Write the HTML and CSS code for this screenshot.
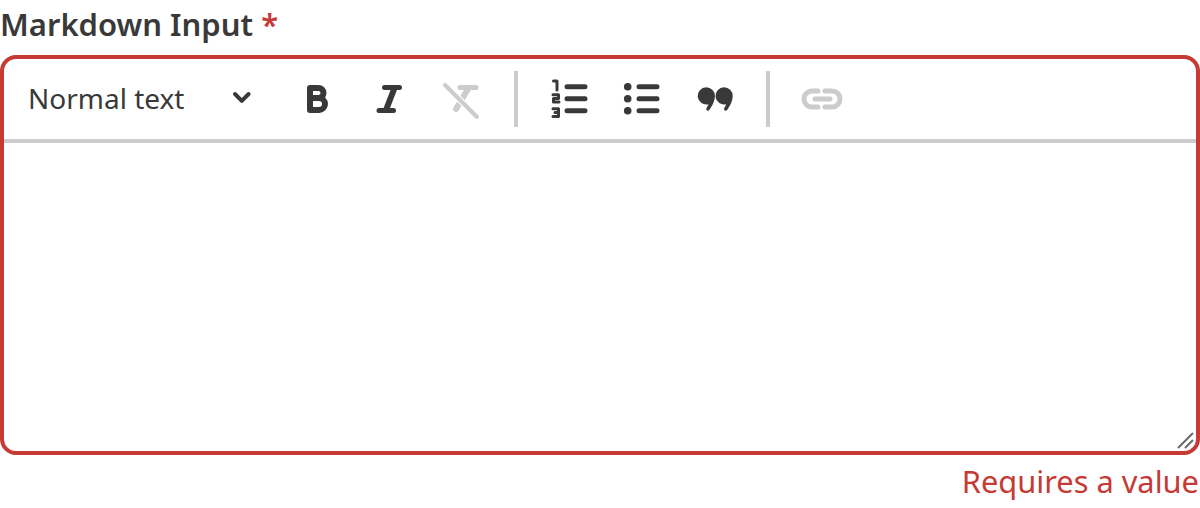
FILE: index.html
```html
<!DOCTYPE html>
<html>
<head>
    <meta name="viewport" content="width=device-width, initial-scale=1.0">
    <title>Markdown Input</title>
    <link rel="stylesheet" href="styles.css">
</head>
<body>
<div class="field">
    <label class="field-label">Markdown Input <span class="required">*</span></label>
    <div class="editor">
        <div class="toolbar">
            <div class="block-select">
                <span>Normal text</span>
                <svg class="chevron" width="20" height="14" viewBox="0 0 20 14"><path d="M3 3l6.800 6.800L16.600 3"/></svg>
            </div>
            <button class="tool" type="button" aria-label="Bold">
                <svg viewBox="0 0 48 48"><path class="heavy" d="M16 13H24.500a5 5 0 0 1 0 10H16zM16 23H25a6 6 0 0 1 0 12H16z"/></svg>
            </button>
            <button class="tool" type="button" aria-label="Italic">
                <svg viewBox="1 0 48 48"><path d="M19.500 12.500H34.500M14 35.500H28.500"/><path class="heavy" d="M29.500 13l-8.500 22"/></svg>
            </button>
            <button class="tool off" type="button" aria-label="Clear formatting">
                <svg viewBox="1 0 48 48">
                    <path d="M23 12.500H39"/>
                    <path class="heavy" d="M31 14L19 34"/>
                    <path class="knock" d="M6.500 8.500l35 35"/>
                    <path class="thin" d="M8 10l32 32"/>
                </svg>
            </button>
            <span class="sep"></span>
            <button class="tool" type="button" aria-label="Ordered list">
                <svg viewBox="0 0 48 48">
                    <path d="M21 11.700H39M21 23.700H39M21 35.700H39"/>
                    <path class="digit" d="M7.500 6H11V15M7 19.800h5.500V23.500H7.500V27H13M7 33.800h5.500V37.500H9M12.500 37.500v4H7"/>
                </svg>
            </button>
            <button class="tool" type="button" aria-label="Bullet list">
                <svg viewBox="0 0 48 48">
                    <path d="M21 11.700H39M21 23.700H39M21 35.700H39"/>
                    <circle class="solid" cx="9.700" cy="11.700" r="3.800"/>
                    <circle class="solid" cx="9.700" cy="23.700" r="3.800"/>
                    <circle class="solid" cx="9.700" cy="35.700" r="3.800"/>
                </svg>
            </button>
            <button class="tool" type="button" aria-label="Blockquote">
                <svg viewBox="-1 0 48 48">
                    <path class="solid" d="M15.300 12.300a8.600 8.600 0 0 1 8.600 8.600c0 5-2.800 10-5.600 14a1.700 1.700 0 0 1-3-1.500L17.500 29.200A8.600 8.600 0 1 1 15.300 12.300z"/>
                    <path class="solid" d="M33.100 12.300a8.600 8.600 0 0 1 8.600 8.600c0 5-2.800 10-5.600 14a1.700 1.700 0 0 1-3-1.500L35.300 29.200A8.600 8.600 0 1 1 33.100 12.300z"/>
                </svg>
            </button>
            <span class="sep"></span>
            <button class="tool off" type="button" aria-label="Link">
                <svg viewBox="0 0 48 48"><path d="M20 16h-6a8 8 0 0 0 0 16h6M27 16h7a8 8 0 0 1 0 16h-7M17 24h15"/></svg>
            </button>
        </div>
        <div class="content"></div>
        <svg class="resizer" width="20" height="20" viewBox="0 0 20 20"><path d="M2 17L17 2M9 17l8-8"/></svg>
    </div>
    <div class="error">Requires a value</div>
</div>
</body>
</html>
```

FILE: styles.css
```css
* {
    margin: 0;
    padding: 0;
    box-sizing: border-box;
    font-family: "Noto Sans", sans-serif;
}
body {
    background: #fff;
    color: #393939;
    overflow: hidden;
}
.field {
    display: flex;
    flex-direction: column;
}
.field-label {
    display: block;
    font-size: 31px;
    font-weight: 600;
    line-height: 42px;
    padding: 3px 0 10px 0;
}
.required {
    color: #c63a36;
}
.editor {
    position: relative;
    height: 400px;
    border: 4px solid #c63a36;
    border-radius: 16px;
    display: flex;
    flex-direction: column;
}
.toolbar {
    display: flex;
    align-items: center;
    height: 80px;
    flex-shrink: 0;
}
.block-select {
    width: 278px;
    padding: 0 30px 2px 24px;
    display: flex;
    align-items: center;
    justify-content: space-between;
    font-size: 28px;
}
.chevron {
    fill: none;
    stroke: #393939;
    stroke-width: 4;
    stroke-linecap: round;
    stroke-linejoin: round;
}
.tool {
    width: 72px;
    height: 48px;
    border: 0;
    background: transparent;
    display: flex;
    align-items: center;
    justify-content: center;
}
.tool svg {
    width: 48px;
    height: 48px;
    fill: none;
    stroke: #393939;
    stroke-width: 5;
    stroke-linecap: round;
    stroke-linejoin: round;
}
.tool svg .solid {
    fill: #393939;
    stroke: none;
}
.tool svg .heavy {
    stroke-width: 6;
}
.tool svg .digit {
    stroke-width: 3;
}
.tool.off svg {
    stroke: #cccccc;
}
.tool.off svg .knock {
    stroke: #fff;
    stroke-width: 6.500;
}
.tool.off svg .thin {
    stroke-width: 4;
}
.sep {
    width: 4px;
    height: 56px;
    margin: 0 16px;
    background: #cccccc;
}
.content {
    flex: 1;
    border-top: 4px solid #cccccc;
}
.resizer {
    position: absolute;
    right: 0;
    bottom: 0;
    fill: none;
    stroke: #6b6b6b;
    stroke-width: 2;
}
.error {
    color: #c63a36;
    font-size: 30.800px;
    line-height: 44px;
    padding-top: 4px;
    text-align: right;
    padding-right: 1px;
}
```
